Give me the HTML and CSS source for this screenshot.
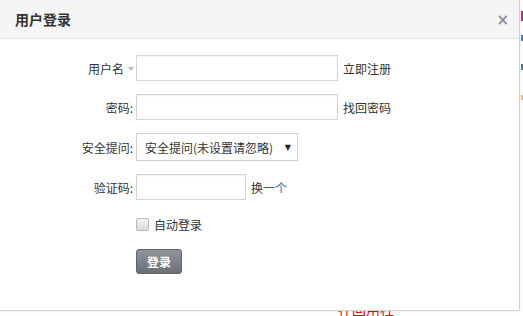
FILE: index.html
```html
<!DOCTYPE html>
<html>
<head>
<meta charset="utf-8">
<link rel="stylesheet" href="styles.css">
</head>
<body>
<div class="page">
  <div class="dialog">
    <div class="dlg-head">
      <span class="dlg-title">用户登录</span>
      <span class="dlg-close">×</span>
    </div>
    <div class="dlg-body">
      <div class="row">
        <div class="label">用户名<span class="caret"></span></div>
        <input class="field" type="text">
        <a class="side">立即注册</a>
      </div>
      <div class="row">
        <div class="label">密码:</div>
        <input class="field" type="password">
        <a class="side">找回密码</a>
      </div>
      <div class="row row-select">
        <div class="label">安全提问:</div>
        <div class="select"><span>安全提问(未设置请忽略)</span><span class="arrow">▼</span></div>
      </div>
      <div class="row">
        <div class="label">验证码:</div>
        <input class="field short" type="text">
        <span class="side">换<a class="link">一个</a></span>
      </div>
      <div class="row row-check">
        <div class="label"></div>
        <span class="check"></span>
        <span class="check-text">自动登录</span>
      </div>
      <div class="row row-btn">
        <div class="label"></div>
        <button class="btn">登录</button>
      </div>
    </div>
  </div>
  <div class="edge">
    <span class="m m1"></span>
    <span class="m m2"></span>
    <span class="m m3"></span>
    <span class="m m4"></span>
  </div>
</div>
<div class="under"><span class="red">在回用柱</span></div>
</body>
</html>
```
FILE: styles.css
```css
html, body {
  margin: 0;
  padding: 0;
  background: #fff;
  font-family: "Noto Sans CJK SC", "Liberation Sans", sans-serif;
  font-size: 12px;
  color: #333;
  overflow: hidden;
}
.page {
  display: flex;
  height: 311px;
}
.dialog {
  width: 519px;
  height: 310px;
  border-right: 1px solid #d0d0d0;
  border-bottom: 1px solid #d6d6d6;
  background: #fff;
  box-shadow: 0 1px 2px rgba(0,0,0,0.08);
}
.dlg-head {
  height: 38px;
  background: #f5f5f5;
  border-bottom: 1px solid #e2e2e2;
  display: flex;
  align-items: center;
  justify-content: space-between;
  padding: 0 10px 0 15px;
}
.dlg-title {
  font-size: 14px;
  font-weight: bold;
  color: #333;
}
.dlg-close {
  font-family: "DejaVu Sans", sans-serif;
  font-size: 15px;
  font-weight: bold;
  color: #8a8f98;
  margin-top: 2px;
}
.dlg-body {
  padding-top: 16px;
}
.row {
  display: flex;
  align-items: center;
  height: 26px;
  margin-bottom: 13px;
}
.row-select { height: 28px; }
.row-check { height: 16px; margin-top: 16px; margin-bottom: 17px; }
.row-btn { height: 25px; }
.label {
  width: 133px;
  margin-right: 3px;
  text-align: right;
  display: flex;
  justify-content: flex-end;
  align-items: center;
  color: #333;
}
.caret {
  width: 0;
  height: 0;
  border-left: 3px solid transparent;
  border-right: 3px solid transparent;
  border-top: 4px solid #bbb;
  margin-left: 4px;
  margin-right: -1px;
  margin-top: 1px;
}
.field {
  box-sizing: border-box;
  width: 202px;
  height: 26px;
  border: 1px solid #d4d4d4;
  box-shadow: inset 0 1px 1px rgba(0,0,0,0.06);
  margin: 0;
  padding: 0 4px;
  background: #fff;
  outline: none;
}
.field.short { width: 110px; }
.side {
  margin-left: 5px;
  color: #333;
  text-decoration: none;
}
.link { color: #2b6cb0; }
.select {
  box-sizing: border-box;
  width: 162px;
  height: 28px;
  border: 1px solid #cfcfcf;
  display: flex;
  align-items: center;
  justify-content: space-between;
  padding: 0 6px 0 8px;
  color: #333;
}
.arrow { font-size: 8px; color: #222; font-family: "DejaVu Sans", sans-serif; }
.check {
  box-sizing: border-box;
  width: 13px;
  height: 13px;
  border: 1px solid #b8b8b8;
  border-radius: 2px;
  background: linear-gradient(#f2f2f2, #dcdcdc);
}
.check-text { margin-left: 5px; }
.btn {
  box-sizing: border-box;
  width: 46px;
  height: 25px;
  border: 1px solid #5f636a;
  border-radius: 3px;
  background: linear-gradient(#90949b, #6b6f76);
  color: #fff;
  font-family: "Noto Sans CJK SC", sans-serif;
  font-size: 12px;
  font-weight: bold;
  padding: 0;
}
.edge {
  flex: 1;
  display: flex;
  flex-direction: column;
  padding-top: 11px;
}
.m { display: block; width: 2px; margin-left: 1px; }
.m1 { height: 10px; background: #e0208a; }
.m2 { height: 6px; background: #2a86c8; margin-top: 14px; }
.m3 { height: 6px; background: #2a86c8; margin-top: 23px; }
.m4 { height: 5px; background: #f2b66a; margin-top: 25px; }
.under {
  height: 5px;
  overflow: hidden;
  padding-left: 338px;
}
.red { color: #e00; font-size: 14px; line-height: 14px; display: block; margin-top: -9px; }
```
